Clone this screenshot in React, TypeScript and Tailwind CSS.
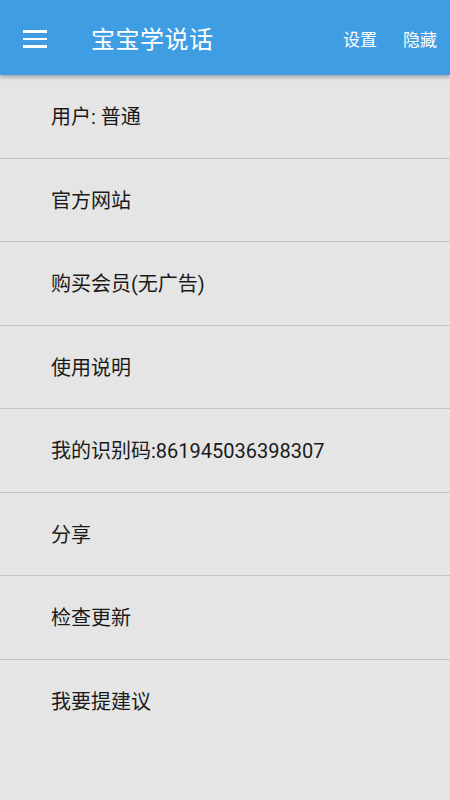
import React from "react";

const items = [
  "用户: 普通",
  "官方网站",
  "购买会员(无广告)",
  "使用说明",
  "我的识别码:861945036398307",
  "分享",
  "检查更新",
  "我要提建议",
];

export default function App() {
  return (
    <div
      className="w-[450px] h-[800px] bg-[#e5e5e5] flex flex-col overflow-hidden"
      style={{ fontFamily: 'Roboto, "Noto Sans CJK SC", sans-serif' }}
    >
      <div className="h-[75px] shrink-0 bg-[#3f9ee3] flex items-center pt-[5px] relative z-10 shadow-[0_2px_4px_rgba(0,0,0,0.3)]">
        <div className="ml-[23px] w-[24px] flex flex-col gap-[5px] -mt-[2px]">
          <div className="h-[2.5px] bg-white" />
          <div className="h-[2.5px] bg-white" />
          <div className="h-[2.5px] bg-white" />
        </div>
        <div className="ml-[44px] text-[24px] text-white leading-none tracking-[0.5px]">宝宝学说话</div>
        <div className="ml-auto mr-[13px] flex gap-[26px] text-[17px] text-white leading-none">
          <span>设置</span>
          <span>隐藏</span>
        </div>
      </div>
      <div className="flex flex-col">
        {items.map((t, i) => (
          <div
            key={i}
            className={
              "h-[83.5px] flex items-center pl-[51px] pt-[2px] text-[20px] text-[#1a1a1a] " +
              (i < items.length - 1 ? "border-b border-[#c4c4c4]" : "")
            }
          >
            {t}
          </div>
        ))}
      </div>
    </div>
  );
}
